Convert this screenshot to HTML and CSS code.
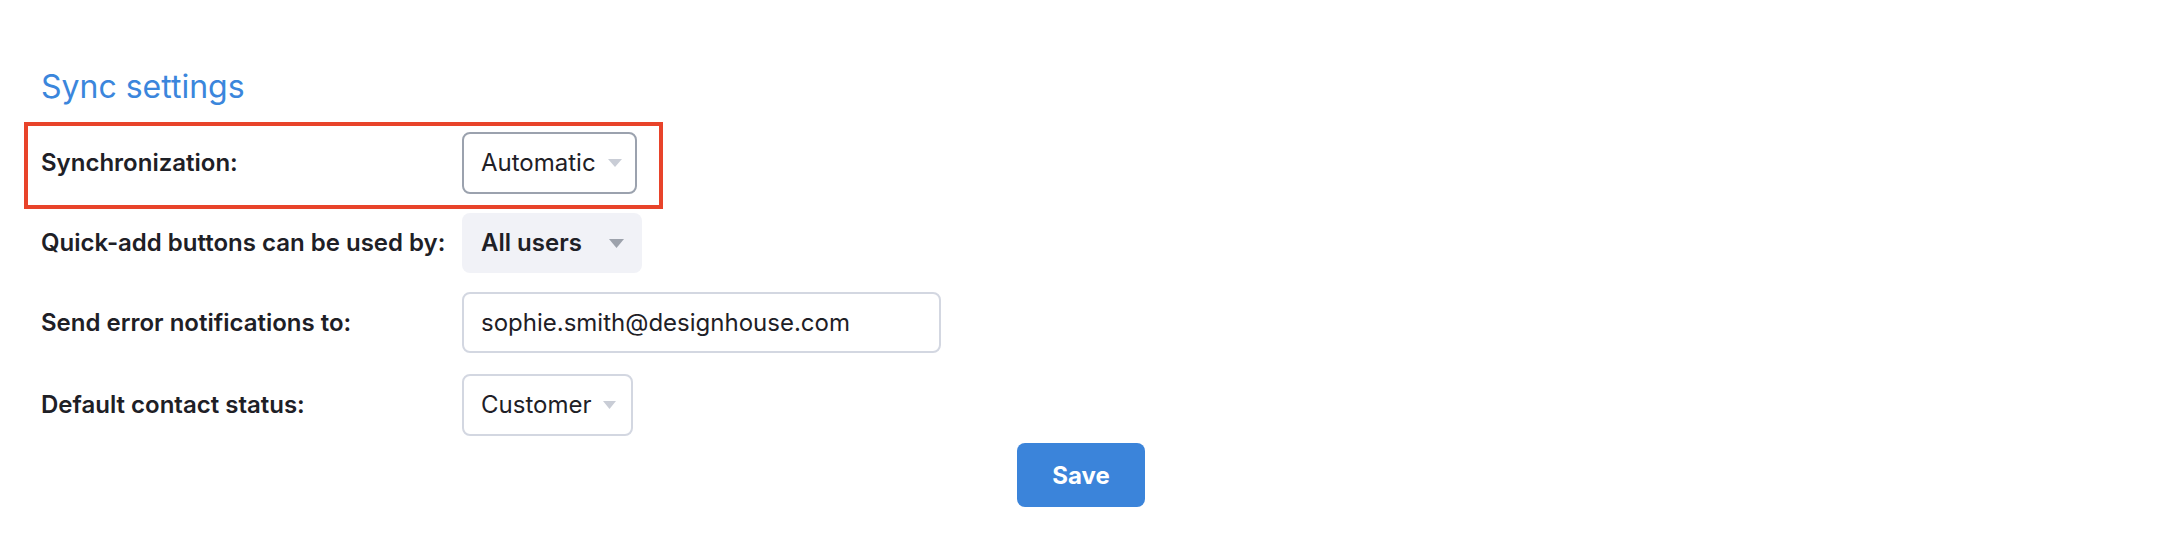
FILE: index.html
```html
<!DOCTYPE html>
<html lang="en">
<head>
<meta charset="utf-8">
<title>Sync settings</title>
<link rel="stylesheet" href="styles.css">
</head>
<body>
<main class="page">
  <h2 class="title">Sync settings</h2>
  <div class="settings">
    <div class="row row--highlight">
      <span class="highlight" aria-hidden="true"></span>
      <div class="label">Synchronization:</div>
      <div class="select select--active">
        <span class="select-value">Automatic</span>
        <svg class="caret" width="14" height="8" viewBox="0 0 14 8"><polygon points="0,0 14,0 7,8" fill="#c9cdd6"/></svg>
      </div>
    </div>
    <div class="row">
      <div class="label">Quick-add buttons can be used by:</div>
      <div class="select select--filled">
        <span class="select-value">All users</span>
        <svg class="caret" width="15" height="9" viewBox="0 0 15 9"><polygon points="0,0 15,0 7.5,9" fill="#9da2ac"/></svg>
      </div>
    </div>
    <div class="row">
      <div class="label">Send error notifications to:</div>
      <div class="input">sophie.smith@designhouse.com</div>
    </div>
    <div class="row row--last">
      <div class="label">Default contact status:</div>
      <div class="select">
        <span class="select-value">Customer</span>
        <svg class="caret" width="13" height="8" viewBox="0 0 13 8"><polygon points="0,0 13,0 6.5,8" fill="#c9cdd6"/></svg>
      </div>
    </div>
  </div>
  <div class="actions">
    <button class="btn-save" type="button">Save</button>
  </div>
</main>
</body>
</html>
```

FILE: styles.css
```css
html, body {
  margin: 0;
  padding: 0;
  background: #ffffff;
}

body {
  font-family: Inter, "Noto Sans", "Liberation Sans", sans-serif;
  color: #1e2026;
}

.page {
  padding: 67px 49px 0 41px;
}

.title {
  margin: 0;
  font-size: 32px;
  line-height: 40px;
  font-weight: 400;
  color: #3b86dc;
}

.settings {
  margin-top: 25px;
  display: flex;
  flex-direction: column;
  gap: 19px;
}

.row {
  display: flex;
  align-items: center;
}

.row--highlight {
  position: relative;
}

.row--last {
  margin-top: 2px;
}

.highlight {
  position: absolute;
  left: -17px;
  top: -10px;
  width: 639px;
  height: 87px;
  box-sizing: border-box;
  border: 4px solid #e8432a;
  pointer-events: none;
}

.label {
  width: 421px;
  flex: none;
  font-size: 24px;
  font-weight: 600;
  line-height: 30px;
  color: #1e2026;
}

.select {
  box-sizing: border-box;
  height: 62px;
  display: flex;
  align-items: center;
  gap: 12px;
  padding: 0 15px 0 17px;
  border: 2px solid #d3d7e1;
  border-radius: 8px;
  background: #ffffff;
  font-size: 24px;
  line-height: 30px;
  font-weight: 400;
}

.select--active {
  border-color: #9ba2ae;
  gap: 12px;
  padding-right: 13px;
}

.select--filled {
  height: 60px;
  border: none;
  background: #f1f2f7;
  padding: 0 18px 0 19px;
  gap: 27px;
  font-weight: 600;
}

.caret {
  display: block;
  flex: none;
}

.input {
  box-sizing: border-box;
  width: 479px;
  height: 61px;
  display: flex;
  align-items: center;
  padding: 0 17px;
  border: 2px solid #d3d7e1;
  border-radius: 8px;
  font-size: 24px;
  line-height: 30px;
  font-weight: 400;
}

.actions {
  margin-top: 7px;
  display: flex;
  justify-content: center;
}

.btn-save {
  width: 128px;
  height: 64px;
  border: none;
  border-radius: 8px;
  background: #3b84da;
  color: #ffffff;
  font-family: Inter, "Noto Sans", "Liberation Sans", sans-serif;
  font-size: 24px;
  font-weight: 700;
  cursor: pointer;
}
```
